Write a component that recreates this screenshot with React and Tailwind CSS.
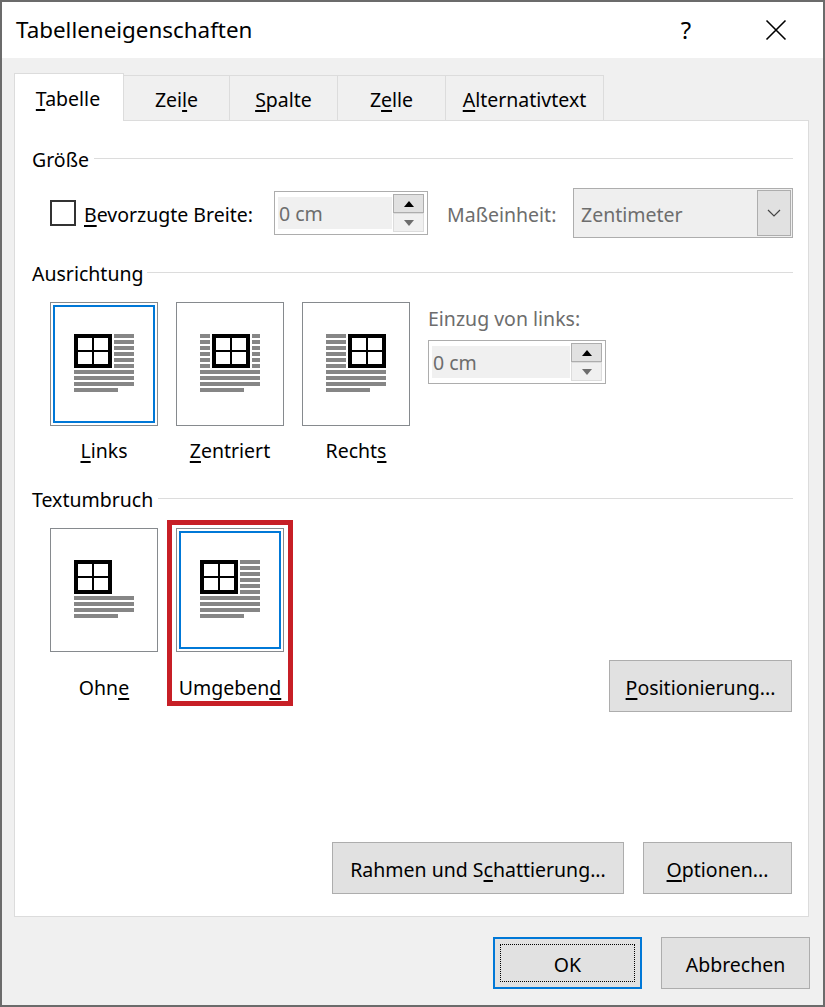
import React from 'react';

const font = { fontFamily: '"Noto Sans", sans-serif' };
const uline = 'underline decoration-2 underline-offset-[3px] [text-decoration-skip-ink:none]';

// text with one underlined access key
function Key({ pre = '', k, post = '' }) {
    return <span>{pre}<span className={uline}>{k}</span>{post}</span>;
}

function LayoutIcon({ tableX, left = false, right = false }) {
    const grey = '#868686';
    const sideRows = [0, 6, 12, 18, 24, 30];
    const bottomRows = [36, 42, 48];
    return (
        <svg width="60" height="58" viewBox="0 0 60 58" shapeRendering="crispEdges" className="block">
            <rect x={tableX} y="0" width="38" height="34" fill="#000" />
            <rect x={tableX + 4} y="4" width="14" height="12" fill="#fff" />
            <rect x={tableX + 20} y="4" width="14" height="12" fill="#fff" />
            <rect x={tableX + 4} y="18" width="14" height="12" fill="#fff" />
            <rect x={tableX + 20} y="18" width="14" height="12" fill="#fff" />
            {left && sideRows.map((y) => <rect key={y} x="0" y={y} width={tableX - 2} height="4" fill={grey} />)}
            {right && sideRows.map((y) => <rect key={y} x={tableX + 40} y={y} width={60 - tableX - 40} height="4" fill={grey} />)}
            {bottomRows.map((y) => <rect key={y} x="0" y={y} width="60" height="4" fill={grey} />)}
            <rect x="0" y="54" width="44" height="4" fill={grey} />
        </svg>
    );
}

function Card({ selected, labelClass, children, icon }) {
    return (
        <div className="flex flex-col items-center w-[108px]">
            <div className="relative w-[108px] h-[124px] border border-[#868a8e] bg-white pt-[31px] pl-[23px]">
                {icon}
                {selected && <div className="absolute inset-[2px] border-2 border-[#0078d7]"></div>}
            </div>
            <div className={`h-[24px] leading-[24px] whitespace-nowrap ${labelClass}`}>{children}</div>
        </div>
    );
}

function Heading({ className, lineClass, children }) {
    return (
        <div className={`flex h-[24px] items-center ${className}`}>
            <span className="leading-[24px] pt-[2px] whitespace-nowrap">{children}</span>
            <div className={`flex-1 h-px bg-[#dcdcdc] -mt-[2px] ${lineClass}`}></div>
        </div>
    );
}

function Spin({ className, fillClass }) {
    return (
        <div className={`flex h-[44px] border border-[#adadad] bg-white pl-[3px] pr-[3px] ${className}`}>
            <div className={`h-[32px] mt-[5px] bg-[#f0f0f0] pl-[1px] leading-[34px] text-[#6d6d6d] ${fillClass}`}>0 cm</div>
            <div className="flex flex-col w-[31px] ml-[1px] mt-[2px] flex-none">
                <div className="flex items-center justify-center h-[19px] border border-[#adadad] bg-[#e1e1e1]">
                    <svg width="10" height="6" viewBox="0 0 10 6"><path d="M5 0 L10 6 L0 6 Z" fill="#000" /></svg>
                </div>
                <div className="flex items-center justify-center h-[19px] border border-[#dcdcdc] bg-[#f0f0f0]">
                    <svg width="10" height="6" viewBox="0 0 10 6"><path d="M0 0 L10 0 L5 6 Z" fill="#6d6d6d" /></svg>
                </div>
            </div>
        </div>
    );
}

function Btn({ className, children }) {
    return (
        <div className={`flex items-center justify-center h-[52px] pt-[4px] border border-[#adadad] bg-[#e1e1e1] whitespace-nowrap ${className}`}>
            {children}
        </div>
    );
}

function Tab({ className, children }) {
    return (
        <div className={`flex items-center justify-center h-[46px] pt-[2px] border border-b-0 border-l-0 border-[#dcdcdc] ${className}`}>
            {children}
        </div>
    );
}

export default function App() {
    return (
        <div style={font} className="w-[825px] h-[1007px] flex flex-col border-2 border-[#6b6b6b] bg-[#f0f0f0] text-[19.5px] text-black">
            <div className="flex items-center h-[56px] bg-white pl-[14px] flex-none">
                <span className="w-[660px] text-[22.4px]">Tabelleneigenschaften</span>
                <span className="w-[20px] text-center text-[24px]">?</span>
                <svg className="ml-[69px]" width="22" height="22" viewBox="0 0 22 22">
                    <path d="M1.5 1.5 L20.5 20.5 M20.5 1.5 L1.5 20.5" stroke="#000" strokeWidth="1.6" fill="none" />
                </svg>
            </div>

            <div className="flex-1 flex flex-col pl-[12px] pr-[14px] pt-[15px] min-h-0">
                <div className="flex items-end h-[48px] -mb-[1px] relative z-10 flex-none">
                    <div className="flex items-center justify-center w-[110px] h-[48px] pt-[3px] pr-[2px] border border-b-0 border-[#dcdcdc] bg-white">
                        <Key k="T" post="abelle" />
                    </div>
                    <Tab className="w-[106px]"><Key pre="Zei" k="l" post="e" /></Tab>
                    <Tab className="w-[108px]"><Key k="S" post="palte" /></Tab>
                    <Tab className="w-[108px]"><Key pre="Z" k="e" post="lle" /></Tab>
                    <Tab className="w-[158px]"><Key k="A" post="lternativtext" /></Tab>
                </div>

                <div className="flex-1 flex flex-col border border-[#dcdcdc] bg-white pl-[17px] pr-[15px] pt-[26px] pb-[22px] min-h-0">
                    <Heading lineClass="ml-[5px]">Größe</Heading>
                    <div className="flex items-center h-[50px] mt-[17px] ml-[18px]">
                        <div className="w-[26px] h-[26px] border-2 border-[#333333] bg-white flex-none"></div>
                        <div className="ml-[8px] w-[190px] pt-[4px] flex-none"><Key k="B" post="evorzugte Breite:" /></div>
                        <Spin className="w-[154px] flex-none" fillClass="w-[114px]" />
                        <div className="ml-[19px] w-[126px] pt-[4px] text-[#6d6d6d] flex-none">Maßeinheit:</div>
                        <div className="flex items-center h-[50px] w-[220px] border border-[#adadad] bg-[#efefef] pl-[7px] pr-px text-[#6d6d6d]">
                            <span className="flex-1 pt-[4px]">Zentimeter</span>
                            <div className="flex items-center justify-center w-[34px] h-[46px] border border-[#adadad] bg-[#e1e1e1]">
                                <svg width="14" height="8" viewBox="0 0 14 8">
                                    <path d="M1 1 L7 7 L13 1" stroke="#444" strokeWidth="1.2" fill="none" />
                                </svg>
                            </div>
                        </div>
                    </div>

                    <Heading className="mt-[23px]" lineClass="ml-[4px]">Ausrichtung</Heading>
                    <div className="flex mt-[17px] ml-[18px] gap-[18px]">
                        <Card selected labelClass="mt-[13px]" icon={<LayoutIcon tableX={0} right />}>
                            <Key k="L" post="inks" />
                        </Card>
                        <Card labelClass="mt-[13px]" icon={<LayoutIcon tableX={12} left right />}>
                            <Key k="Z" post="entriert" />
                        </Card>
                        <Card labelClass="mt-[13px]" icon={<LayoutIcon tableX={22} left />}>
                            <Key pre="Recht" k="s" />
                        </Card>
                        <div className="pt-[5px]">
                            <div className="h-[24px] leading-[24px] text-[#6d6d6d]">Einzug von links:</div>
                            <Spin className="w-[178px] mt-[9px]" fillClass="w-[138px]" />
                        </div>
                    </div>

                    <Heading className="mt-[24px]" lineClass="ml-[5px]">Textumbruch</Heading>
                    <div className="flex h-[184px] mt-[17px] ml-[18px] gap-[18px]">
                        <Card labelClass="mt-[24px]" icon={<LayoutIcon tableX={0} />}>
                            <Key pre="Ohn" k="e" />
                        </Card>
                        <div className="relative h-[172px]">
                            <Card selected labelClass="mt-[24px]" icon={<LayoutIcon tableX={0} right />}>
                                <Key pre="Umgeben" k="d" />
                            </Card>
                            <div className="absolute -left-[9px] -right-[9px] -top-[8px] -bottom-[6px] border-[5px] border-[#c71f26]"></div>
                        </div>
                        <Btn className="w-[183px] self-end ml-auto mr-px"><Key k="P" post="ositionierung..." /></Btn>
                    </div>

                    <div className="flex justify-end mt-auto gap-[19px] pr-px">
                        <Btn className="w-[292px]"><Key pre="Rahmen und S" k="c" post="hattierung..." /></Btn>
                        <Btn className="w-[149px]"><Key k="O" post="ptionen..." /></Btn>
                    </div>
                </div>

                <div className="flex justify-end gap-[19px] pt-[20px] pb-[16px] -mr-px flex-none">
                    <div className="flex items-center justify-center w-[149px] h-[52px] border-2 border-[#0078d7] bg-[#e1e1e1] p-[5px]">
                        <div className="flex items-center justify-center w-full h-full pt-[4px] border border-dotted border-black">OK</div>
                    </div>
                    <Btn className="w-[149px]">Abbrechen</Btn>
                </div>
            </div>
        </div>
    );
}
